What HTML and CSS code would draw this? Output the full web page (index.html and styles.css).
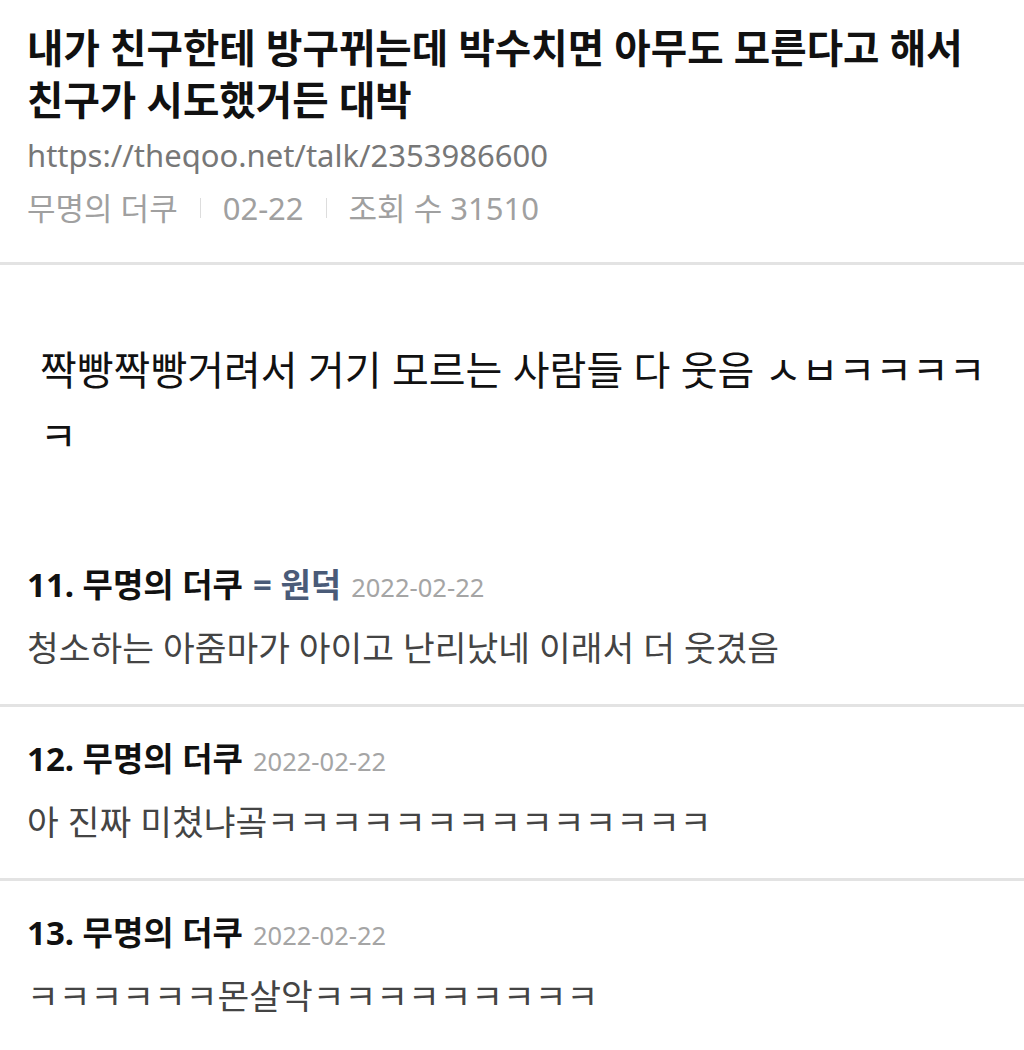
FILE: index.html
```html
<!DOCTYPE html>
<html lang="ko">
<head>
    <meta charset="UTF-8">
    <meta name="viewport" content="width=device-width, initial-scale=1.0">
    <title>더쿠 - 친구가 시도했거든 대박</title>
    <link rel="stylesheet" href="styles.css">
</head>
<body>
    <!-- 글 제목과 정보 -->
    <div class="post-head">
        <h1 class="post-title">내가 친구한테 방구뀌는데 박수치면 아무도 모른다고 해서 친구가 시도했거든 대박</h1>
        <p class="post-url">https://theqoo.net/talk/2353986600</p>
        <div class="post-meta">
            <span>무명의 더쿠</span>
            <span class="sep"></span>
            <span>02-22</span>
            <span class="sep"></span>
            <span>조회 수 31510</span>
        </div>
    </div>

    <!-- 본문 -->
    <div class="post-body">
        <p>짝빵짝빵거려서 거기 모르는 사람들 다 웃음 ㅅㅂㅋㅋㅋㅋㅋ</p>
    </div>

    <!-- 댓글 -->
    <div class="comments">
        <div class="comment">
            <div class="comment-head">
                <span class="comment-name">11. 무명의 더쿠</span>
                <span class="comment-op">= 원덕</span>
                <span class="comment-date">2022-02-22</span>
            </div>
            <p class="comment-text">청소하는 아줌마가 아이고 난리났네 이래서 더 웃겼음</p>
        </div>
        <div class="comment">
            <div class="comment-head">
                <span class="comment-name">12. 무명의 더쿠</span>
                <span class="comment-date">2022-02-22</span>
            </div>
            <p class="comment-text">아 진짜 미쳤냐곸ㅋㅋㅋㅋㅋㅋㅋㅋㅋㅋㅋㅋㅋㅋ</p>
        </div>
        <div class="comment">
            <div class="comment-head">
                <span class="comment-name">13. 무명의 더쿠</span>
                <span class="comment-date">2022-02-22</span>
            </div>
            <p class="comment-text">ㅋㅋㅋㅋㅋㅋ몬살악ㅋㅋㅋㅋㅋㅋㅋㅋㅋ</p>
        </div>
    </div>
</body>
</html>
```

FILE: styles.css
```css
/* 기본 */
body {
    margin: 0;
    background: #fff;
    font-family: "Noto Sans", "Noto Sans CJK KR", sans-serif;
    color: #111;
}

p {
    margin: 0;
}

/* 글 제목 영역 */
.post-head {
    padding: 22px 27px 26px;
    border-bottom: 3px solid #e3e3e3;
}

.post-title {
    margin: 0;
    font-size: 39.6px;
    font-weight: 700;
    line-height: 52px;
    color: #111;
}

.post-url {
    margin-top: 4px;
    font-size: 31px;
    line-height: 50px;
    color: #777;
}

.post-meta {
    display: flex;
    align-items: center;
    font-size: 31px;
    line-height: 56px;
    color: #a0a0a0;
}

.post-meta .sep {
    width: 1px;
    height: 20px;
    margin: 0 22px;
    background: #ddd;
}

/* 본문 */
.post-body {
    padding: 72px 20px 64px 40px;
}

.post-body p {
    font-size: 40px;
    line-height: 66px;
    color: #111;
}

/* 댓글 */
.comment {
    padding: 22px 27px 26px;
    border-top: 3px solid #e3e3e3;
}

.comment:first-child {
    border-top: none;
}

.comment-head {
    display: flex;
    align-items: baseline;
    gap: 10px;
    height: 60px;
    line-height: 60px;
}

.comment-name {
    font-size: 33px;
    font-weight: 700;
    color: #111;
}

.comment-op {
    font-size: 33px;
    font-weight: 700;
    color: #4a5b78;
}

.comment-date {
    font-size: 25.5px;
    color: #a5a5a5;
}

.comment-text {
    margin-top: 3px;
    font-size: 34.5px;
    line-height: 60px;
    color: #444;
}
```
